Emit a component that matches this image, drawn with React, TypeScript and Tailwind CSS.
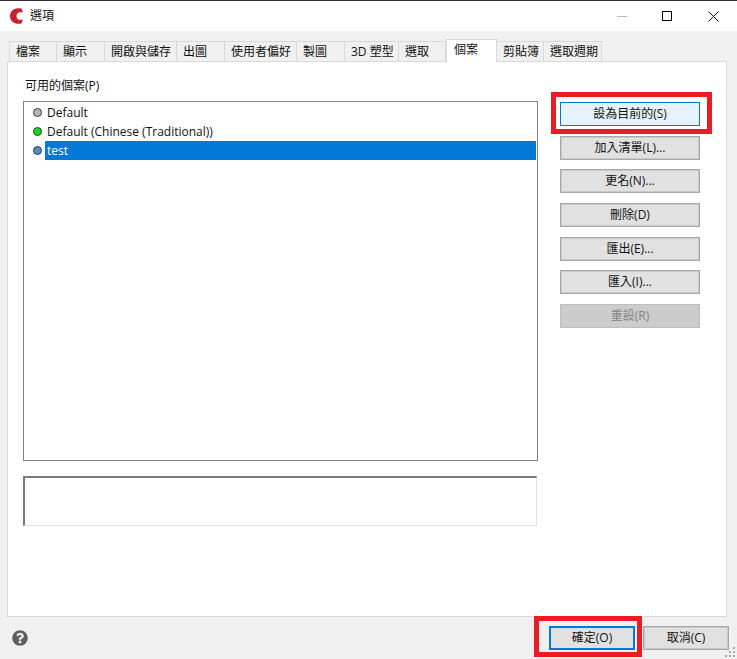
import React from "react";
import { FaQuestionCircle } from "react-icons/fa";

const FONT = "font-['Open_Sans','Noto_Sans_CJK_TC',sans-serif]";

const TABS = [
  { label: "檔案", w: "w-[48px]" },
  { label: "顯示", w: "w-[48px]" },
  { label: "開啟與儲存", w: "w-[72px]" },
  { label: "出圖", w: "w-[48px]" },
  { label: "使用者偏好", w: "w-[72px]" },
  { label: "製圖", w: "w-[48px]" },
  { label: "3D 塑型", w: "w-[54px]" },
  { label: "選取", w: "w-[47px]" },
  { label: "個案", w: "w-[51px]", active: true },
  { label: "剪貼簿", w: "w-[47px]" },
  { label: "選取週期", w: "w-[58px]" },
];

const PROFILES = [
  { name: "Default", dot: "bg-[#b5b5b5]" },
  { name: "Default (Chinese (Traditional))", dot: "bg-[#12e012]" },
  { name: "test", dot: "bg-[#4f8fc9]", selected: true },
];

function Dot({ color }: { color: string }) {
  return <span className={`h-[9px] w-[9px] shrink-0 rounded-full border border-[#3a3a3a] ${color}`} />;
}

function SideButton({ label, className = "" }: { label: string; className?: string }) {
  return (
    <button
      className={`flex h-[24px] w-[140px] items-center justify-center border border-[#a8a8a8] bg-[#e1e1e1] text-[12px] text-[#111] shadow-[inset_0_0_0_1px_#c9c9c9] ${className}`}
    >
      {label}
    </button>
  );
}

export default function App() {
  return (
    <div className={`flex h-[659px] w-[737px] flex-col overflow-hidden bg-[#f0f0f0] text-[12px] text-[#111] ${FONT}`}>
      {/* title bar */}
      <div className="flex h-[31px] shrink-0 items-center border-t border-[#333] bg-white pl-[9px]">
        <svg width="16" height="18" viewBox="0 0 16 18" className="shrink-0">
          <path d="M12.5 1.5 C6 0 1 3.5 1 9 C1 14.5 6 18 12.5 16.5 L14 12.5 C10.5 13.5 7.5 12.5 7.5 9 C7.5 5.5 10.5 4.5 14 5.5 Z" fill="#c8202f" />
        </svg>
        <span className="ml-[5px] text-[12px]">選項</span>
        <div className="ml-auto flex items-center">
          <span className="h-px w-[10px] bg-[#bbb]" />
          <span className="ml-[35px] h-[10px] w-[10px] border border-black" />
          <svg width="11" height="11" viewBox="0 0 11 11" className="ml-[36px] mr-[18px]">
            <path d="M0.5 0.5 L10.5 10.5 M10.5 0.5 L0.5 10.5" stroke="#111" strokeWidth="1" />
          </svg>
        </div>
      </div>

      {/* tabs */}
      <div className="flex h-[30px] shrink-0 items-end pl-[9px]">
        {TABS.map((t) =>
          t.active ? (
            <div
              key={t.label}
              className={`z-10 -mb-px h-[23px] border border-b-0 border-[#d9d9d9] bg-white pl-[7px] pt-[1px] ${t.w}`}
            >
              {t.label}
            </div>
          ) : (
            <div
              key={t.label}
              className={`flex h-[20px] items-center border-t border-r border-[#d9d9d9] bg-[#f0f0f0] pl-[6px] pt-[1px] first:border-l ${t.w}`}
            >
              {t.label}
            </div>
          )
        )}
      </div>

      {/* panel */}
      <div className="ml-[7px] flex h-[556px] w-[720px] shrink-0 border border-[#d9d9d9] bg-white">
        <div className="ml-[15px] flex w-[515px] flex-col">
          <div className="ml-[2px] mt-[15px] h-[24px] leading-[18px]">可用的個案(P)</div>
          <div className="flex h-[360px] flex-col border border-[#82838a] pt-[1px]">
            {PROFILES.map((p) => (
              <div key={p.name} className="flex h-[19px] items-center pl-[9px]">
                <Dot color={p.dot} />
                <span
                  className={`ml-[3px] mr-[1px] flex h-[19px] flex-1 items-center pl-[2px] text-[12px] ${
                    p.selected ? "bg-[#0078d7] text-white" : ""
                  }`}
                >
                  {p.name}
                </span>
              </div>
            ))}
          </div>
          <div className="mt-[15px] h-[50px] w-[514px] border-t-2 border-l-2 border-r border-b border-t-[#7a7a7a] border-l-[#7a7a7a] border-r-[#e3e3e3] border-b-[#e3e3e3]" />
        </div>

        <div className="ml-[22px] mt-[40px] flex flex-col gap-[9.7px]">
          <div className="relative">
            <button className="flex h-[24px] w-[140px] items-center justify-center border border-[#0078d7] bg-[#e5f1fb] text-[12px] text-[#111]">
              設為目前的(S)
            </button>
            <div className="absolute left-[-9px] top-[-10px] h-[42px] w-[161px] border-[5px] border-[#ed1c24]" />
          </div>
          <SideButton label="加入清單(L)..." />
          <SideButton label="更名(N)..." />
          <SideButton label="刪除(D)" />
          <SideButton label="匯出(E)..." />
          <SideButton label="匯入(I)..." />
          <SideButton label="重設(R)" className="!border-[#bfbfbf] !bg-[#cccccc] !text-[#838383] !shadow-none" />
        </div>
      </div>

      {/* footer */}
      <div className="relative flex flex-1 items-center pl-[12px] pr-[8px]">
        <FaQuestionCircle size={16} className="shrink-0 text-[#5f5f5f]" />
        <div className="relative ml-auto">
          <button className="flex h-[24px] w-[86px] items-center justify-center border-2 border-[#0078d7] bg-[#e1e1e1] text-[12px]">
            確定(O)
          </button>
          <div className="absolute left-[-15px] top-[-10px] h-[41px] w-[108px] border-[5px] border-[#ed1c24]" />
        </div>
        <button className="ml-[8px] flex h-[24px] w-[86px] items-center justify-center border border-[#a8a8a8] bg-[#e1e1e1] text-[12px] shadow-[inset_0_0_0_1px_#c9c9c9]">
          取消(C)
        </button>
        <svg width="11" height="11" viewBox="0 0 11 11" className="absolute bottom-[1px] right-[1px]">
          <g fill="#a8a8a8">
            <rect x="8" y="0" width="2" height="2" />
            <rect x="4" y="4" width="2" height="2" />
            <rect x="8" y="4" width="2" height="2" />
            <rect x="0" y="8" width="2" height="2" />
            <rect x="4" y="8" width="2" height="2" />
            <rect x="8" y="8" width="2" height="2" />
          </g>
        </svg>
      </div>
    </div>
  );
}
